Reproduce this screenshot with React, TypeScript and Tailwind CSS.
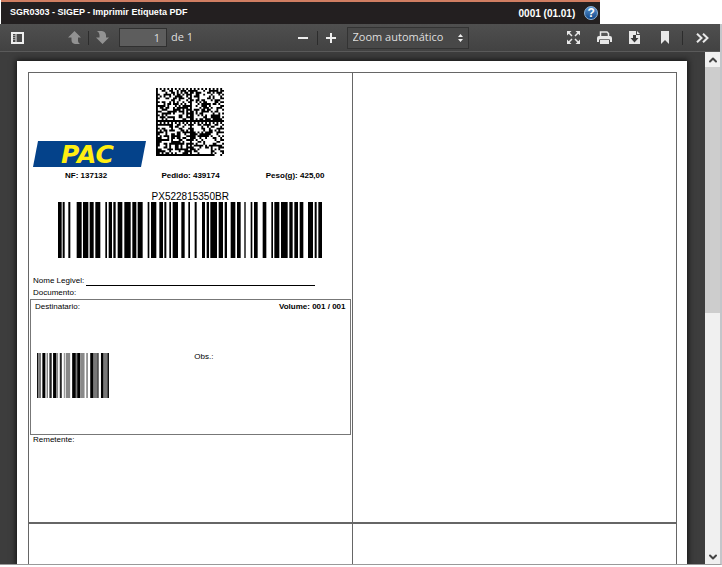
import { ChevronDown, ChevronUp } from "lucide-react";

// [start, end] pairs, three units to a pixel
const TRACKING_BARS = [
  [0, 11], [14, 20], [31, 37], [56, 71], [75, 91], [95, 107], [112, 127], [142, 147], [152, 162],
  [166, 173], [179, 193], [199, 218], [223, 235], [239, 254], [269, 274], [279, 295], [304, 315],
  [319, 325], [334, 339], [344, 360], [370, 380], [391, 396], [410, 416], [432, 441], [446, 453],
  [457, 477], [482, 495], [500, 507], [518, 532], [537, 548], [559, 563], [578, 583], [588, 599],
  [614, 625], [640, 645], [649, 664], [669, 689], [694, 704], [709, 720], [725, 736], [750, 765],
  [770, 776], [781, 792],
];

const ZIP_BARS: [number, number, string][] = [
  [0, 4, "#111"], [4, 12, "#777"], [16, 25, "#000"], [29, 32, "#555"], [37, 44, "#222"],
  [48, 58, "#000"], [58, 63, "#888"], [68, 74, "#222"], [80, 84, "#999"], [86, 99, "#888"],
  [105, 116, "#000"], [116, 120, "#777"], [120, 129, "#000"], [129, 142, "#888"], [147, 152, "#888"],
  [159, 169, "#000"], [169, 180, "#777"], [180, 184, "#222"], [191, 199, "#000"], [199, 210, "#777"],
  [210, 215, "#111"],
];

// 36x36 data matrix made of four 18x18 regions
const buildMatrix = () => {
  let seed = 52281535;
  let path = "";
  for (let y = 0; y < 36; y++) {
    for (let x = 0; x < 36; x++) {
      seed = (seed * 16807) % 2147483647;
      const rx = x % 18;
      const ry = y % 18;
      let on = (seed >> 8) % 100 < 50;
      const blank = (x > 19 && x < 24 && y > 19 && y < 23) || (x > 22 && x < 28 && y > 31 && y < 35);
      if (blank) on = false;
      if (rx === 17) on = y % 2 === 1;
      if (ry === 0) on = x % 2 === 0;
      if (rx === 0 || ry === 17) on = true;
      if (x > 29 && y > 33) on = (x + y) % 4 === 1;
      if (on) path += `M${x} ${y}h1v1h-1z`;
    }
  }
  return path;
};

const MATRIX_PATH = buildMatrix();

const TitleBar = () => (
  <header className="ml-px flex h-6 w-[83%] shrink-0 items-center justify-between border-t-2 border-[#d07e62] bg-[#231f20] pl-[9px] pr-[2px] font-bold text-white">
    <h1 className="text-[9px]">SGR0303 - SIGEP - Imprimir Etiqueta PDF</h1>
    <div className="flex items-center gap-[9px] text-[10px]">
      <span>0001 (01.01)</span>
      <button
        type="button"
        aria-label="Ajuda"
        className="flex h-[14px] w-[14px] items-center justify-center rounded-full border border-[#8db4dc] bg-linear-to-b from-[#5b96d2] to-[#0f4689] text-xs leading-none"
      >
        ?
      </button>
    </div>
  </header>
);

const Separator = () => <span className="h-[14px] w-px bg-[#2c2c2c]" />;

const Toolbar = () => (
  <div className="flex h-7 shrink-0 items-center justify-between border-b border-[#5a5a5a] bg-linear-to-b from-[#4f4f4f] to-[#424242] pl-[11px] pr-[11px] font-['Open_Sans',sans-serif] text-[11px] text-[#dedede]">
    <div className="flex items-center">
      <button type="button" aria-label="Painel lateral">
        <svg width="13" height="12" viewBox="0 0 13 12">
          <rect x="1" y="1" width="11" height="10" fill="#4a4a4a" stroke="#eee" strokeWidth="2" />
          <path d="M2 3.500h2.500M2 5.500h2.500M2 7.500h2.500" stroke="#999" />
          <path d="M5 1v10" stroke="#eee" />
        </svg>
      </button>
      <button type="button" aria-label="Página anterior" className="ml-11">
        <svg width="13" height="13" viewBox="0 0 13 13" fill="#929292">
          <path d="M6.500 0L13 6.500H10V10Q10 11.500 12 13H7Q3.500 12.500 3.500 9V6.500H0z" />
        </svg>
      </button>
      <span className="mx-[7px] flex">
        <Separator />
      </span>
      <button type="button" aria-label="Próxima página">
        <svg width="13" height="13" viewBox="0 0 13 13" fill="#929292">
          <path d="M6.500 13L13 6.500H10V4Q9.500 0.500 6 0H1Q3.500 1.500 3.500 4V6.500H0z" />
        </svg>
      </button>
      <input
        aria-label="Página"
        defaultValue="1"
        className="ml-[10px] h-[19px] w-12 border border-[#303030] bg-[#5d5d5d] pr-[6px] text-right"
      />
      <span className="ml-1">de 1</span>
    </div>

    <div className="flex items-center pl-[6px]">
      <button type="button" aria-label="Reduzir">
        <svg width="10" height="10" viewBox="0 0 10 10">
          <path d="M0 5h10" stroke="#eee" strokeWidth="2" />
        </svg>
      </button>
      <span className="ml-[9px] mr-[8px] flex">
        <Separator />
      </span>
      <button type="button" aria-label="Ampliar">
        <svg width="10" height="10" viewBox="0 0 10 10">
          <path d="M0 5h10M5 0v10" stroke="#eee" strokeWidth="2" />
        </svg>
      </button>
      <div className="relative ml-[11px]">
        <select
          aria-label="Zoom"
          className="h-[22px] w-[122px] appearance-none border border-[#333] bg-[#484848] pl-[5px]"
        >
          <option>Zoom automático</option>
        </select>
        <svg className="pointer-events-none absolute right-[6px] top-[7px]" width="5" height="8" viewBox="0 0 5 8" fill="#eee">
          <path d="M2.500 0L5 3H0zM0 5h5L2.500 8z" />
        </svg>
      </div>
    </div>

    <div className="flex items-center">
      <button type="button" aria-label="Apresentação">
        <svg width="13" height="13" viewBox="0 0 13 13" fill="#e8e8e8" stroke="#e8e8e8">
          <path d="M0 0h4.500L0 4.500zM13 0H8.500L13 4.500zM0 13h4.500L0 8.500zM13 13H8.500L13 8.500z" stroke="none" />
          <path d="M1.500 1.500l3.500 3.500M11.500 1.500L8 5M1.500 11.500L5 8M11.500 11.500L8 8" strokeWidth="1.500" />
        </svg>
      </button>
      <button type="button" aria-label="Imprimir" className="ml-[17px]">
        <svg width="15" height="13" viewBox="0 0 15 13">
          <path d="M3.500 6V1h6.500l1.500 1.500V6" fill="#555" stroke="#e8e8e8" strokeWidth="1.500" />
          <path d="M2 5h11q2 0 2 2v4h-2V8.500H2V11H0V7q0-2 2-2z" fill="#e8e8e8" />
          <path d="M3 9h9v4H3z" fill="#e8e8e8" />
          <path d="M3 8.500h9" stroke="#777" />
        </svg>
      </button>
      <button type="button" aria-label="Baixar" className="ml-[17px]">
        <svg width="11" height="13" viewBox="0 0 11 13">
          <path d="M0 0h7v4h4v9H0zM8 0l3 3H8z" fill="#e8e8e8" />
          <path d="M4 4h3v3h2.500l-4 4.500-4-4.500H4z" fill="#3a3a3a" />
        </svg>
      </button>
      <button type="button" aria-label="Marcador" className="ml-[21px]">
        <svg width="8" height="13" viewBox="0 0 8 13">
          <path d="M0 0h8v13L4 9l-4 4z" fill="#e8e8e8" />
        </svg>
      </button>
      <span className="mx-[13px] flex">
        <Separator />
      </span>
      <button type="button" aria-label="Ferramentas">
        <svg width="13" height="10" viewBox="0 0 13 10" fill="none" stroke="#e8e8e8" strokeWidth="2">
          <path d="M1 0.700L5.500 5 1 9.300M7 0.700L11.500 5 7 9.300" />
        </svg>
      </button>
    </div>
  </div>
);

const ShippingLabel = () => (
  <article className="px-px pt-[15px] text-[8px] leading-3 text-black">
    <div className="flex h-[79px] items-end gap-[10px] pl-[3px]">
      <svg width="113" height="26" viewBox="0 0 113 26" className="overflow-visible">
        <path d="M5 0h108l-5 26H0z" fill="#04428a" />
        <text x="28" y="22" fill="#ffee12" fontSize="25" fontWeight="700" fontStyle="italic" fontFamily="'DejaVu Sans', sans-serif">
          PAC
        </text>
      </svg>
      <svg width="68" height="68" viewBox="0 0 36 36" className="mb-[11px]">
        <path d={MATRIX_PATH} />
      </svg>
    </div>

    <div className="mt-[3px] flex justify-between pl-[35px] pr-[26px] font-bold">
      <span>NF: 137132</span>
      <span className="pl-2">Pedido: 439174</span>
      <span>Peso(g): 425,00</span>
    </div>

    <figure className="mt-[9px] flex flex-col items-center">
      <figcaption className="text-[10px] leading-[11px]">PX522815350BR</figcaption>
      <svg width="264" height="56" viewBox="0 0 792 168">
        {TRACKING_BARS.map(([start, end]) => (
          <rect key={start} x={start} width={end - start} height="168" />
        ))}
      </svg>
    </figure>

    <div className="mt-[17px] flex pl-[3px]">
      <span>Nome Legivel:</span>
      <span className="mb-px ml-[2px] mr-9 flex-1 border-b border-black" />
    </div>
    <p className="pl-[3px]">Documento:</p>

    <section className="h-[136px] border border-[#777] pl-1 pr-[4px] pt-px">
      <div className="flex justify-between">
        <span>Destinatario:</span>
        <span className="font-bold">Volume: 001 / 001</span>
      </div>
      <div className="mt-[38px] grid grid-cols-2">
        <svg width="72" height="45" viewBox="0 0 215 135" preserveAspectRatio="none" className="ml-[2px] mt-[2px]">
          {ZIP_BARS.map(([start, end, fill]) => (
            <rect key={start} x={start} width={end - start} height="135" fill={fill} />
          ))}
        </svg>
        <span className="pl-1">Obs.:</span>
      </div>
    </section>
    <p className="pl-[3px] leading-[10px]">Remetente:</p>
  </article>
);

const Scrollbar = () => (
  <div className="flex w-[15px] shrink-0 flex-col bg-[#f0f0f0] text-[#444]">
    <button type="button" aria-label="Rolar para cima" className="flex h-[15px] items-center justify-center">
      <ChevronUp size={12} strokeWidth={4} />
    </button>
    <div className="flex-1">
      <div className="h-[51%] bg-[#cdcdcd]" />
    </div>
    <button type="button" aria-label="Rolar para baixo" className="flex h-[15px] items-center justify-center">
      <ChevronDown size={12} strokeWidth={4} />
    </button>
  </div>
);

const App = () => (
  <div className="flex h-screen flex-col overflow-hidden bg-white pb-[2px] font-['Liberation_Sans',Arial,sans-serif]">
    <TitleBar />
    <div className="flex min-h-0 flex-1 flex-col border-b border-r-2 border-b-[#999] border-r-[#c3c6ca]">
      <Toolbar />
      <div className="flex min-h-0 flex-1">
        <main className="flex min-w-0 flex-1 overflow-hidden bg-[#3d3d3d] pl-[17px] pr-[18px] pt-[9px]">
          <div className="flex flex-1 flex-col bg-white pl-[11px] pr-[10px] pt-[11px] shadow-[0_0_6px_1px_#111]">
            <div className="grid flex-1 grid-cols-2 grid-rows-[451px_1fr] border-x border-t border-[#666]">
              <div className="border-b-2 border-r border-[#666]">
                <ShippingLabel />
              </div>
              <div className="border-b-2 border-[#666]" />
              <div className="border-r border-[#666]" />
              <div />
            </div>
          </div>
        </main>
        <Scrollbar />
      </div>
    </div>
  </div>
);

export default App;
